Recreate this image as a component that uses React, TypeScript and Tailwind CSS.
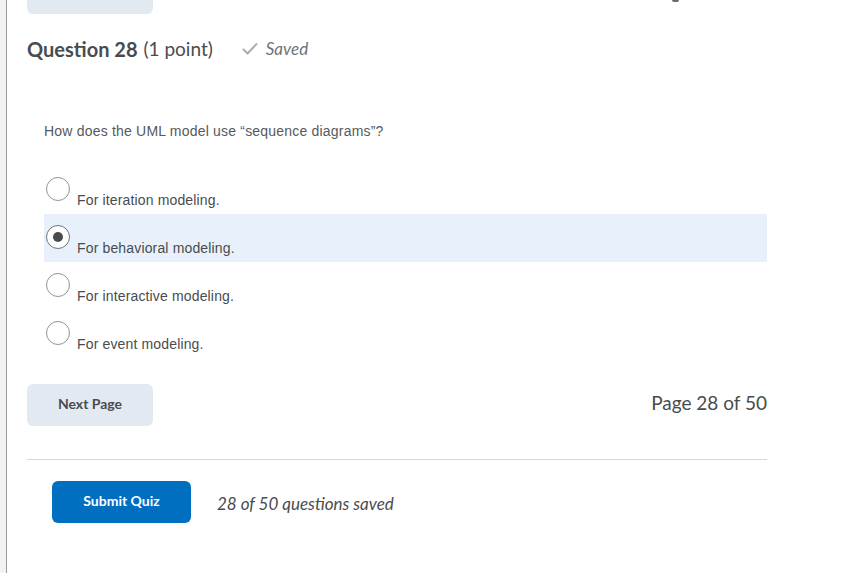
import React from "react";

const options = [
  "For iteration modeling.",
  "For behavioral modeling.",
  "For interactive modeling.",
  "For event modeling.",
];

export default function App() {
  const selected = 1;
  return (
    <div className="flex w-[846px] h-[573px] overflow-hidden bg-white" style={{ fontFamily: "Lato, 'Noto Sans', sans-serif" }}>
      <div className="w-[6px] shrink-0 bg-[#f2f2f2]" />
      <div className="w-px shrink-0 bg-[#9a9a9a]" />
      <div className="relative flex-1 pl-[20px]">
        <div className="absolute left-[665px] top-0 h-[2px] w-[7px] bg-[#6b6b6b] rounded-b-sm" />
        <div className="w-[740px]">
          <div className="-mt-[28px] h-[42px] w-[126px] rounded-md bg-[#e3e9f1]" />
          <div className="mt-[20px] flex h-[30px] items-center text-[#494c4e]">
            <span className="text-[20px] font-bold">Question 28</span>
            <span className="ml-[6px] text-[19px]">(1 point)</span>
            <svg className="ml-[29px]" width="16" height="14" viewBox="0 0 16 14" fill="none">
              <path d="M1.5 7.5 L5.5 11.5 L14.5 2" stroke="#a9adb0" strokeWidth="2" strokeLinecap="round" strokeLinejoin="round" />
            </svg>
            <span className="ml-[8px] text-[17px] italic text-[#6e7376]">Saved</span>
          </div>
          <div
            className="mt-[57px] ml-[17px] h-[20px] text-[14px] leading-[20px] tracking-[0.2px] text-[#565a5c]"
            style={{ fontFamily: "'Liberation Sans', Arial, sans-serif" }}
          >
            How does the UML model use “sequence diagrams”?
          </div>
          <div className="mt-[25px] ml-[17px]" style={{ fontFamily: "'Liberation Sans', Arial, sans-serif" }}>
            {options.map((o, i) => (
              <div key={o} className={`flex h-[48px] items-start ${i === selected ? "bg-[#e8f1fb]" : ""}`}>
                <div
                  className={`ml-[2px] mt-[11px] flex h-[24px] w-[24px] shrink-0 items-center justify-center rounded-full border bg-white ${i === selected ? "border-[#6e7376]" : "border-[#8f9396]"}`}
                >
                  {i === selected && <div className="h-[10px] w-[10px] rounded-full bg-[#494c4e]" />}
                </div>
                <span className="ml-[7px] mt-[26px] text-[14px] leading-[16px] tracking-[0.15px] text-[#494c4e]">{o}</span>
              </div>
            ))}
          </div>
          <div className="mt-[26px] flex items-center justify-between">
            <button className="h-[42px] w-[126px] rounded-md bg-[#e3e9f1] pb-[4px] text-[14px] font-bold text-[#494c4e]">Next Page</button>
            <span className="-mt-[4px] text-[19px] text-[#494c4e]">Page 28 of 50</span>
          </div>
          <div className="mt-[33px] h-px bg-[#d3d9e3]" />
          <div className="mt-[21px] ml-[25px] flex items-center">
            <button className="h-[42px] w-[139px] rounded-md bg-[#006fbf] pb-[4px] text-[14px] font-bold text-white">Submit Quiz</button>
            <span className="ml-[26px] mt-[3px] text-[17px] italic text-[#494c4e]">28 of 50 questions saved</span>
          </div>
        </div>
      </div>
    </div>
  );
}
